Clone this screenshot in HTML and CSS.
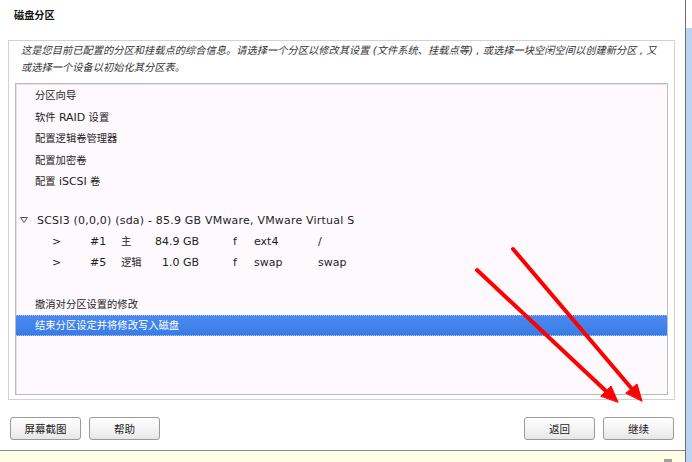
FILE: index.html
```html
<!DOCTYPE html>
<html>
<head>
<meta charset="utf-8">
<link rel="stylesheet" href="styles.css">
</head>
<body>
<div class="app">
  <div class="main">
    <div class="title">磁盘分区</div>
    <div class="frame">
      <p class="desc">这是您目前已配置的分区和挂载点的综合信息。请选择一个分区以修改其设置 (文件系统、挂载点等) , 或选择一块空闲空间以创建新分区 , 又<br>或选择一个设备以初始化其分区表。</p>
      <div class="list">
        <div class="group">
          <div class="row">分区向导</div>
          <div class="row">软件 <span class="lat">RAID</span> 设置</div>
          <div class="row">配置逻辑卷管理器</div>
          <div class="row">配置加密卷</div>
          <div class="row">配置 <span class="lat">iSCSI</span> 卷</div>
        </div>
        <div class="tree">
          <div class="row disk"><svg class="tri" width="8" height="6" viewBox="0 0 8 6"><polygon points="0.5,0.5 7.5,0.5 4,5.5" fill="none" stroke="#555" stroke-width="1"/></svg><span class="lat wide">SCSI3 (0,0,0) (sda) - 85.9 GB VMware, VMware Virtual S</span></div>
          <div class="row part"><span class="c-arrow lat">&gt;</span><span class="c-num lat">#1</span><span class="c-type">主</span><span class="c-size lat">84.9 GB</span><span class="c-f lat">f</span><span class="c-fs lat">ext4</span><span class="c-mnt lat">/</span></div>
          <div class="row part"><span class="c-arrow lat">&gt;</span><span class="c-num lat">#5</span><span class="c-type">逻辑</span><span class="c-size lat">1.0 GB</span><span class="c-f lat">f</span><span class="c-fs lat">swap</span><span class="c-mnt lat">swap</span></div>
          <div class="row"></div>
          <div class="row">撤消对分区设置的修改</div>
          <div class="row selected">结束分区设定并将修改写入磁盘</div>
        </div>
      </div>
    </div>
    <div class="buttons">
      <div class="btn-group">
        <button class="btn">屏幕截图</button>
        <button class="btn">帮助</button>
      </div>
      <div class="btn-group">
        <button class="btn">返回</button>
        <button class="btn">继续</button>
      </div>
    </div>
    <div class="status"><span class="status-box"></span></div>
  </div>
  <div class="side"></div>
</div>
<svg class="arrows" width="692" height="462" viewBox="0 0 692 462">
  <g stroke="#ff0000" stroke-width="4" stroke-linecap="round" fill="#ff0000">
    <line x1="477" y1="270" x2="607" y2="392"/>
    <polygon points="618,402 611,386 601,396" stroke-width="1" stroke-linejoin="round"/>
    <line x1="513" y1="249" x2="632" y2="389"/>
    <polygon points="642,401 637,384 626,393" stroke-width="1" stroke-linejoin="round"/>
  </g>
</svg>
</body>
</html>
```
FILE: styles.css
```css
html, body {
  margin: 0;
  padding: 0;
  background: #ffffff;
}
body {
  font-family: "DejaVu Sans", "Noto Sans CJK SC", sans-serif;
  font-size: 10.3px;
  color: #1e1e1e;
  width: 692px;
  height: 462px;
  overflow: hidden;
  position: relative;
}
.lat {
  font-size: 11px;
}
.wide {
  letter-spacing: 0.2px;
}
.app {
  display: flex;
  height: 462px;
}
.main {
  width: 685px;
  display: flex;
  flex-direction: column;
}
.side {
  width: 6px;
  border-left: 1px solid #6e6e6e;
  background: linear-gradient(to bottom, #ffffff 0, #ffffff 28px, #b9d3f1 28px, #b9d3f1 100%);
}
.title {
  height: 40px;
  box-sizing: border-box;
  padding: 7px 0 0 14px;
  font-weight: bold;
  font-size: 10.2px;
  line-height: 16px;
  font-family: "Noto Sans CJK SC", sans-serif;
  color: #111;
}
.frame {
  margin: 0 10px 0 8px;
  height: 360px;
  box-sizing: border-box;
  border: 1px solid #d2d2d2;
  padding: 1px 6px 4px 6px;
  display: flex;
  flex-direction: column;
}
.desc {
  margin: 0 0 7px 6px;
  font-style: italic;
  font-size: 10.25px;
  line-height: 17px;
  color: #333;
  white-space: nowrap;
}
.list {
  flex: 1;
  border: 1px solid #bdbdbd;
  box-shadow: inset 1px 1px 0 #e2e2e2;
  background: #fdf9fd;
  padding-top: 1px;
}
.group .row {
  height: 21.5px;
  line-height: 21.5px;
}
.tree {
  margin-top: 17px;
}
.row {
  height: 21px;
  line-height: 21px;
  padding-left: 19px;
  white-space: nowrap;
}
.disk {
  padding-left: 3px;
  display: flex;
  align-items: center;
}
.tri {
  display: block;
  margin: 0 9px 0 1px;
}
.part {
  display: flex;
  padding-left: 36px;
}
.part span { display: block; }
.c-arrow { width: 38px; }
.c-num { width: 31px; }
.c-type { width: 34px; }
.c-size { width: 44px; text-align: right; }
.c-f { width: 21px; margin-left: 34px; }
.c-fs { width: 64px; }
.selected {
  background: linear-gradient(to bottom, #4a89ee, #3a7ce6);
  color: #ffffff;
  border-top: 1px dotted #a6c4f3;
  border-bottom: 1px dotted #a6c4f3;
  height: 19px;
  line-height: 19px;
}
.buttons {
  height: 50px;
  box-sizing: border-box;
  padding: 17px 11px 0 10px;
  display: flex;
  justify-content: space-between;
  align-items: flex-start;
}
.btn-group {
  display: flex;
  gap: 8px;
}
.btn {
  width: 71px;
  height: 23px;
  margin: 0;
  padding: 0;
  border: 1px solid #9a9a9a;
  border-radius: 3px;
  background: linear-gradient(to bottom, #ffffff, #f2f2f2 60%, #e6e6e6);
  font-family: "Noto Sans CJK SC", sans-serif;
  font-size: 10.5px;
  color: #222;
}
.status {
  flex: 1;
  border-top: 1px solid #8a8a8a;
  background: #fffde6;
  position: relative;
}
.status-box {
  position: absolute;
  right: 13px;
  bottom: 0;
  width: 8px;
  height: 3px;
  background: #a0a0a0;
}
.arrows {
  position: absolute;
  left: 0;
  top: 0;
  pointer-events: none;
}
```
